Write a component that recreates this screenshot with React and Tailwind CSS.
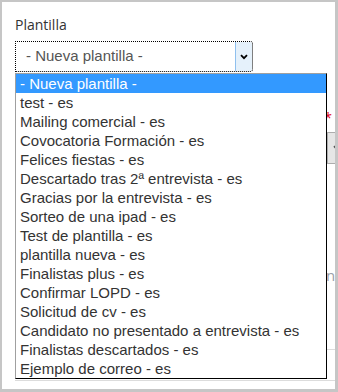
import React from 'react';

const options = [
  '- Nueva plantilla -',
  'test - es',
  'Mailing comercial - es',
  'Covocatoria Formación - es',
  'Felices fiestas - es',
  'Descartado tras 2ª entrevista - es',
  'Gracias por la entrevista - es',
  'Sorteo de una ipad - es',
  'Test de plantilla - es',
  'plantilla nueva - es',
  'Finalistas plus - es',
  'Confirmar LOPD - es',
  'Solicitud de cv - es',
  'Candidato no presentado a entrevista - es',
  'Finalistas descartados - es',
  'Ejemplo de correo - es',
];

const Chevron = ({ className }) => (
  <svg viewBox="0 0 8 6" className={className} fill="none">
    <path d="M1 1.2 L4 4.2 L7 1.2" stroke="currentColor" strokeWidth="1.8" />
  </svg>
);

const App = () => {
  return (
    <div className="relative w-[338px] h-[392px] overflow-hidden bg-white border-l-2 border-t-2 border-r-[3px] border-b-[3px] border-[#c6c6c6]">
      <div className="pl-[13px] pt-[13px]">
        {/* Template label */}
        <div className="text-[14px] leading-[20px] text-[#333]" style={{ fontFamily: '"Open Sans", sans-serif' }}>
          Plantilla
        </div>

        {/* Focused select */}
        <div
          className="mt-[6px] w-[238px] h-[31px] flex border border-dotted border-black rounded-r-[3px]"
          style={{ fontFamily: '"Liberation Sans", Arial, sans-serif' }}
        >
          <div className="flex-1 flex items-center pl-[10px] text-[15px] text-[#555]">- Nueva plantilla -</div>
          <div className="w-[17px] flex items-center justify-center bg-[#e5f1fb] border-l border-[#8fc0ee] rounded-r-[2px]">
            <Chevron className="w-[8px] h-[6px] text-black" />
          </div>
        </div>

        {/* Page content behind the open list */}
        <div className="mt-[36px] h-[20px] flex justify-end pr-[3px] text-[14px] leading-[20px] text-[#e0001b]" style={{ fontFamily: '"Open Sans", sans-serif' }}>
          *
        </div>
        <div className="mt-[4px] h-[32px] w-[331px] flex border border-[#adadad]">
          <div className="flex-1 bg-white" />
          <div className="w-[18px] flex items-center justify-center bg-[#e6e6e6] border-l border-[#adadad]">
            <Chevron className="w-[8px] h-[6px] text-[#555]" />
          </div>
        </div>
        <div
          className="mt-[101px] pl-[311px] whitespace-nowrap text-[15px] leading-[20px] text-[#9aa0a8]"
          style={{ fontFamily: '"Open Sans", sans-serif' }}
        >
          nc
        </div>
        <div className="mt-[64px] h-[32px] w-[330px] border-t border-b border-[#dcdcdc]" />
      </div>

      {/* Open dropdown list */}
      <ul
        className="absolute left-[13px] top-[71px] w-[312px] border-l border-t border-[#a0a0a0] border-r border-b border-r-black border-b-black bg-white"
        style={{ fontFamily: '"Liberation Sans", Arial, sans-serif' }}
      >
        {options.map((o, i) => (
          <li
            key={o}
            className={
              i === 0
                ? 'h-[19px] leading-[19px] pl-[4px] text-[15px] whitespace-nowrap bg-[#3399ff] text-white'
                : 'h-[19px] leading-[19px] pl-[4px] text-[15px] whitespace-nowrap text-[#333]'
            }
          >
            {o}
          </li>
        ))}
      </ul>
    </div>
  );
};

export default App;
